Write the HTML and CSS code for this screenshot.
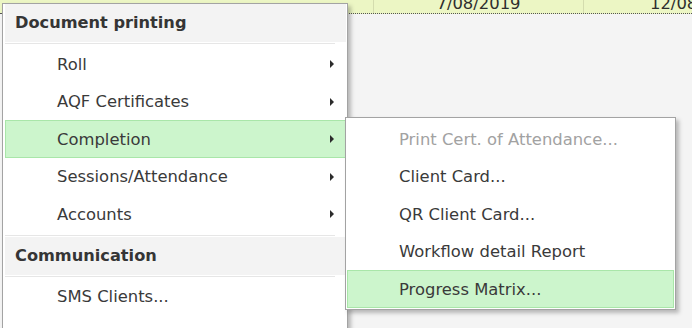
FILE: index.html
```html
<!DOCTYPE html>
<html lang="en">
<head>
    <meta charset="UTF-8">
    <title>Document printing menu</title>
    <link rel="stylesheet" href="styles.css">
</head>
<body>
    <div class="grid-strip">
        <div class="cell cell-first"></div>
        <div class="cell cell-mid"><span>7/08/2019</span></div>
        <div class="cell cell-last"><span>12/08/2019</span></div>
    </div>

    <!-- Main popup menu -->
    <div class="menu menu-main">
        <div class="menu-header">Document printing</div>
        <div class="menu-sep"></div>
        <div class="menu-item"><span>Roll</span><i class="arrow"></i></div>
        <div class="menu-item"><span>AQF Certificates</span><i class="arrow"></i></div>
        <div class="menu-item active"><span>Completion</span><i class="arrow"></i></div>
        <div class="menu-item"><span>Sessions/Attendance</span><i class="arrow"></i></div>
        <div class="menu-item"><span>Accounts</span><i class="arrow"></i></div>
        <div class="menu-sep sep-top"></div>
        <div class="menu-header">Communication</div>
        <div class="menu-sep"></div>
        <div class="menu-item"><span>SMS Clients...</span></div>
        <div class="menu-item"><span>Email Clients...</span></div>
    </div>

    <!-- Submenu of Completion -->
    <div class="menu menu-sub">
        <div class="menu-item disabled"><span>Print Cert. of Attendance...</span></div>
        <div class="menu-item"><span>Client Card...</span></div>
        <div class="menu-item"><span>QR Client Card...</span></div>
        <div class="menu-item"><span>Workflow detail Report</span></div>
        <div class="menu-item active"><span>Progress Matrix...</span></div>
    </div>
</body>
</html>
```

FILE: styles.css
```css
body {
    margin: 0;
    background-color: #f4f4f4;
    font-family: "DejaVu Sans", Verdana, sans-serif;
    font-size: 16.4px;
    color: #3a3a3a;
    height: 328px;
    overflow: hidden;
}

/* Grid row behind the menus */
.grid-strip {
    display: flex;
    height: 13px;
    background-color: #ecf6c4;
    border-bottom: 1px dotted #555;
}
.cell {
    height: 13px;
    overflow: hidden;
    border-right: 1px solid #d4dcae;
    line-height: 8px;
    text-align: center;
    color: #2e2e2e;
}
.cell-first {
    width: 373px;
}
.cell-mid {
    width: 209px;
}
.cell-last {
    flex: 1;
    border-right: none;
    text-align: left;
    padding-left: 66px;
    white-space: nowrap;
}

/* Popup menus */
.menu {
    position: absolute;
    background-color: #fff;
    border: 1px solid #a3a3a3;
    box-shadow: 3px 3px 4px rgba(0, 0, 0, 0.25);
}
.menu-main {
    left: 2px;
    top: 3px;
    width: 341px;
    padding: 0 1px 0 2px;
    z-index: 1;
}
.menu-sub {
    left: 345px;
    top: 117px;
    width: 327px;
    padding: 2px 1px 1px 1px;
    z-index: 2;
}
.menu-header {
    height: 38px;
    line-height: 38px;
    padding-left: 10px;
    background-color: #f3f3f3;
    font-weight: bold;
    font-size: 16.2px;
    color: #353535;
}
.menu-sep {
    height: 1px;
    margin: 1px 11px 1px 0;
    background-color: #e6e6e6;
}
.sep-top {
    margin-top: 2px;
}
.menu-item {
    height: 37.5px;
    box-sizing: border-box;
    display: flex;
    align-items: center;
    justify-content: space-between;
    padding: 1px 11px 0 51px;
    border: 1px solid transparent;
    white-space: nowrap;
}
.menu-item.active {
    background-color: #ccf5cc;
    border-color: #a9e6a9;
}
.menu-item.disabled {
    color: #a2a2a2;
}
.arrow {
    width: 0;
    height: 0;
    border-left: 4px solid #2b2b2b;
    border-top: 4px solid transparent;
    border-bottom: 4px solid transparent;
}
```
